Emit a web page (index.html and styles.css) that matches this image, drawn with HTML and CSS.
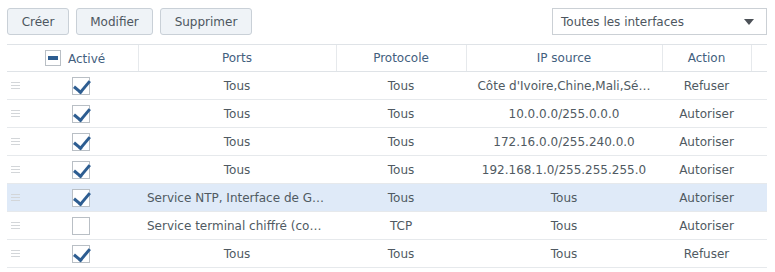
FILE: index.html
```html
<!DOCTYPE html>
<html lang="fr">
<head>
    <meta charset="UTF-8">
    <title>Pare-feu</title>
    <link rel="stylesheet" href="styles.css">
</head>
<body>
    <div class="toolbar">
        <div class="buttons">
            <button class="btn btn-create">Créer</button>
            <button class="btn btn-edit">Modifier</button>
            <button class="btn btn-delete">Supprimer</button>
        </div>
        <div class="select">
            <span>Toutes les interfaces</span>
            <span class="arrow"></span>
        </div>
    </div>

    <table class="rules">
        <colgroup>
            <col class="c-drag">
            <col class="c-check">
            <col class="c-ports">
            <col class="c-proto">
            <col class="c-ip">
            <col class="c-action">
            <col class="c-fill">
        </colgroup>
        <thead>
            <tr>
                <th colspan="2" class="th-enabled"><span class="box box-mixed"><i></i></span>Activé</th>
                <th>Ports</th>
                <th>Protocole</th>
                <th>IP source</th>
                <th>Action</th>
                <th></th>
            </tr>
        </thead>
        <tbody>
            <tr>
                <td class="drag"><span class="handle"></span></td>
                <td class="check"><span class="box checked"></span></td>
                <td>Tous</td>
                <td>Tous</td>
                <td>Côte d'Ivoire,Chine,Mali,Sé…</td>
                <td>Refuser</td>
                <td></td>
            </tr>
            <tr>
                <td class="drag"><span class="handle"></span></td>
                <td class="check"><span class="box checked"></span></td>
                <td>Tous</td>
                <td>Tous</td>
                <td>10.0.0.0/255.0.0.0</td>
                <td>Autoriser</td>
                <td></td>
            </tr>
            <tr>
                <td class="drag"><span class="handle"></span></td>
                <td class="check"><span class="box checked"></span></td>
                <td>Tous</td>
                <td>Tous</td>
                <td>172.16.0.0/255.240.0.0</td>
                <td>Autoriser</td>
                <td></td>
            </tr>
            <tr>
                <td class="drag"><span class="handle"></span></td>
                <td class="check"><span class="box checked"></span></td>
                <td>Tous</td>
                <td>Tous</td>
                <td>192.168.1.0/255.255.255.0</td>
                <td>Autoriser</td>
                <td></td>
            </tr>
            <tr class="selected">
                <td class="drag"><span class="handle"></span></td>
                <td class="check"><span class="box checked"></span></td>
                <td class="left">Service NTP, Interface de G…</td>
                <td>Tous</td>
                <td>Tous</td>
                <td>Autoriser</td>
                <td></td>
            </tr>
            <tr>
                <td class="drag"><span class="handle"></span></td>
                <td class="check"><span class="box"></span></td>
                <td class="left">Service terminal chiffré (co…</td>
                <td>TCP</td>
                <td>Tous</td>
                <td>Autoriser</td>
                <td></td>
            </tr>
            <tr>
                <td class="drag"><span class="handle"></span></td>
                <td class="check"><span class="box checked"></span></td>
                <td>Tous</td>
                <td>Tous</td>
                <td>Tous</td>
                <td>Refuser</td>
                <td></td>
            </tr>
        </tbody>
    </table>
</body>
</html>
```

FILE: styles.css
```css
body {
    margin: 0;
    padding: 8px 8px 0 7px;
    background: #fff;
    font-family: "DejaVu Sans", Verdana, sans-serif;
    font-size: 12px;
    color: #505a62;
}
.toolbar {
    display: flex;
    justify-content: space-between;
    align-items: center;
    height: 27px;
    margin-bottom: 9px;
}
.buttons {
    display: flex;
    gap: 7px;
}
.btn {
    height: 27px;
    padding: 0;
    background: #eff3f7;
    border: 1px solid #c9d0d7;
    border-radius: 3px;
    font-family: inherit;
    font-size: 12px;
    color: #4d5660;
}
.btn-create { width: 62px; }
.btn-edit { width: 77px; }
.btn-delete { width: 92px; }
.select {
    box-sizing: border-box;
    width: 215px;
    height: 27px;
    border: 1px solid #cbd0d5;
    display: flex;
    align-items: center;
    justify-content: space-between;
    padding: 0 12px 0 8px;
    color: #4d5660;
}
.arrow {
    width: 0;
    height: 0;
    border-left: 5px solid transparent;
    border-right: 5px solid transparent;
    border-top: 6px solid #4c5157;
}
.rules {
    width: 760px;
    border-collapse: collapse;
    table-layout: fixed;
}
.c-drag { width: 33px; }
.c-check { width: 98px; }
.c-ports { width: 198px; }
.c-proto { width: 130px; }
.c-ip { width: 196px; }
.c-action { width: 89px; }
.c-fill { width: 16px; }
th {
    height: 26px;
    padding: 0;
    font-weight: normal;
    color: #43607e;
    border-top: 1px solid #dfe3e7;
    border-bottom: 1px solid #dfe3e7;
    border-left: 1px solid #e6e9ec;
    text-align: center;
}
th:first-child { border-left: none; }
.th-enabled {
    text-align: left;
    padding-left: 38px;
}
td {
    height: 27px;
    padding: 0;
    text-align: center;
    white-space: nowrap;
    overflow: hidden;
    border-bottom: 1px solid #e6e9ec;
}
td.left {
    text-align: left;
    padding-left: 9px;
}
tr.selected td { background: #dfeaf8; }
.drag { text-align: left; }
.handle {
    display: block;
    margin-left: 4px;
    width: 9px;
    height: 5px;
    border-top: 1px solid #d3d6d9;
    border-bottom: 1px solid #d3d6d9;
    position: relative;
}
.handle::after {
    content: "";
    position: absolute;
    left: 0;
    right: 0;
    top: 2px;
    border-top: 1px solid #d3d6d9;
}
.check { text-align: left; padding-left: 32px; }
.box {
    display: inline-block;
    box-sizing: border-box;
    width: 18px;
    height: 18px;
    border: 1px solid #b9bfc5;
    background: #fff;
    vertical-align: middle;
    position: relative;
}
.box.checked::after {
    content: "";
    position: absolute;
    left: 4px;
    top: -1px;
    width: 7px;
    height: 13px;
    border-right: 3px solid #2d5d91;
    border-bottom: 3px solid #2d5d91;
    transform: rotate(40deg);
    transform-origin: 50% 50%;
}
.box-mixed {
    width: 16px;
    height: 16px;
    margin-right: 7px;
    vertical-align: -3px;
}
.box-mixed i {
    position: absolute;
    left: 2px;
    top: 5px;
    width: 10px;
    height: 4px;
    background: #2d5d91;
}
```
